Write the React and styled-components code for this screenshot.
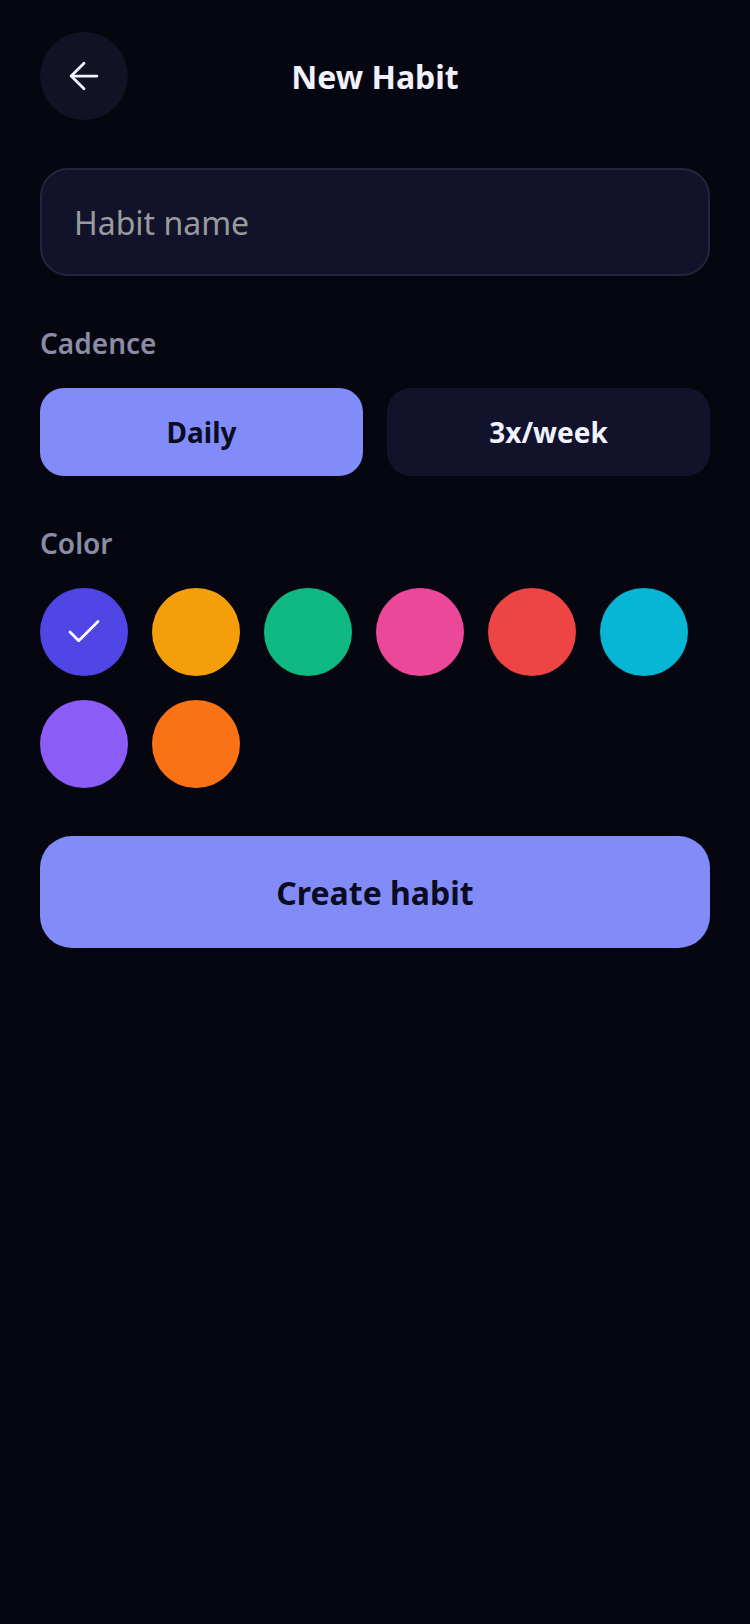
import React, { useState } from 'react';
import styled, { createGlobalStyle } from 'styled-components';
import { ArrowLeft, Check } from 'lucide-react';

const GlobalStyle = createGlobalStyle`
  html, body {
    margin: 0;
    padding: 0;
    background: #05060f;
  }
  * {
    box-sizing: border-box;
  }
`;

const Page = styled.div`
  min-height: 1624px;
  background: #05060f;
  padding: 32px 40px 40px;
  display: flex;
  flex-direction: column;
  font-family: "Noto Sans", "Open Sans", sans-serif;
`;

const Header = styled.header`
  display: grid;
  grid-template-columns: 88px 1fr 88px;
  align-items: center;
  height: 88px;
`;

const BackButton = styled.button`
  width: 88px;
  height: 88px;
  border-radius: 50%;
  border: none;
  background: #111224;
  color: #f1f1ff;
  display: flex;
  align-items: center;
  justify-content: center;
  padding: 0;
  cursor: pointer;
`;

const Title = styled.h1`
  margin: 0;
  text-align: center;
  font-size: 32px;
  font-weight: 700;
  color: #f1f1ff;
`;

const NameInput = styled.input`
  margin-top: 48px;
  height: 108px;
  width: 100%;
  border-radius: 28px;
  border: 2px solid #24253c;
  background: #12132a;
  padding: 0 32px;
  font-family: "Noto Sans", "Open Sans", sans-serif;
  font-size: 32px;
  color: #f1f1ff;
  outline: none;

  &::placeholder {
    color: #9a9a9f;
  }
`;

const Label = styled.div`
  margin-top: 48px;
  margin-bottom: 26px;
  font-size: 28px;
  line-height: 38px;
  font-weight: 600;
  color: #8a8ca6;
`;

const Segments = styled.div`
  display: grid;
  grid-template-columns: 1fr 1fr;
  gap: 24px;
`;

const Segment = styled.button`
  height: 88px;
  border: none;
  border-radius: 24px;
  background: ${p => (p.$active ? '#818cf8' : '#12132a')};
  color: ${p => (p.$active ? '#0b0c24' : '#f1f1ff')};
  font-family: "Noto Sans", "Open Sans", sans-serif;
  font-size: 28px;
  font-weight: 700;
  cursor: pointer;
`;

const Swatches = styled.div`
  display: flex;
  flex-wrap: wrap;
  gap: 24px;
`;

const Swatch = styled.button`
  width: 88px;
  height: 88px;
  border-radius: 50%;
  border: none;
  padding: 0;
  background: ${p => p.$color};
  color: #ffffff;
  display: flex;
  align-items: center;
  justify-content: center;
  cursor: pointer;
`;

const CreateButton = styled.button`
  margin-top: 48px;
  height: 112px;
  width: 100%;
  border: none;
  border-radius: 32px;
  background: #818cf8;
  color: #0b0c24;
  font-family: "Noto Sans", "Open Sans", sans-serif;
  font-size: 32px;
  font-weight: 700;
  cursor: pointer;
`;

const colors = ['#4f46e5', '#f59e0b', '#10b981', '#ec4899', '#ef4444', '#06b6d4', '#8b5cf6', '#f97316'];

const App = () => {
  const [cadence, setCadence] = useState('daily');
  const [color, setColor] = useState(colors[0]);

  return (
    <>
      <GlobalStyle />
      <Page>
        <Header>
          <BackButton aria-label="Back">
            <ArrowLeft size={44} strokeWidth={1.5} />
          </BackButton>
          <Title>New Habit</Title>
          <span />
        </Header>

        <NameInput placeholder="Habit name" />

        <Label>Cadence</Label>
        <Segments>
          <Segment $active={cadence === 'daily'} onClick={() => setCadence('daily')}>Daily</Segment>
          <Segment $active={cadence === 'weekly'} onClick={() => setCadence('weekly')}>3x/week</Segment>
        </Segments>

        <Label>Color</Label>
        <Swatches>
          {colors.map(c => (
            <Swatch key={c} $color={c} onClick={() => setColor(c)}>
              {color === c && <Check size={42} strokeWidth={1.6} />}
            </Swatch>
          ))}
        </Swatches>

        <CreateButton>Create habit</CreateButton>
      </Page>
    </>
  );
};

export default App;
